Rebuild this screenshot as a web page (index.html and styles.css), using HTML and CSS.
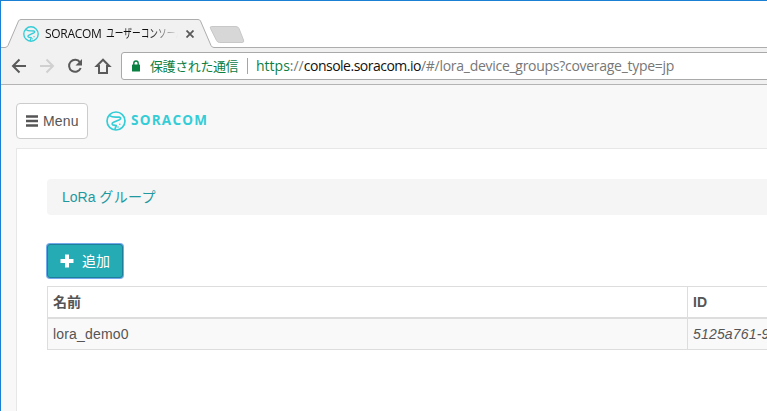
FILE: index.html
```
<!DOCTYPE html>
<html lang="ja">
<head>
<meta charset="utf-8">
<title>SORACOM ユーザーコンソール</title>
<link rel="stylesheet" href="styles.css">
</head>
<body>
<div class="window">
  <svg width="0" height="0" class="defs">
    <symbol id="mark" viewBox="0 0 20 20">
      <g fill="none" stroke="#34cdd7" stroke-width="1.7" stroke-linejoin="round" stroke-linecap="round">
        <circle cx="10" cy="10" r="9"/>
        <path d="M4 4.800C6.500 6.800 10 5.800 13.300 6.200C15.200 6.500 15 8 13.500 8.700L7.500 11.300C5.300 12.400 6 14 7.800 14.200L10.300 14.600L9 18"/>
      </g>
      <circle cx="13.800" cy="13.300" r=".8" fill="#34cdd7"/>
      <circle cx="12" cy="16" r=".8" fill="#34cdd7"/>
    </symbol>
  </svg>
  <header class="tabs">
    <svg class="tab-shape" width="766" height="47" viewBox="1 1 766 47">
      <path d="M0 47.500H5Q7 47.500 8 45.500L18.500 21Q19.200 19.500 21 19.500H198Q199.800 19.500 200.500 21L211 45.500Q212 47.500 214 47.500H768V50H0Z" fill="#f1f1f1" stroke="#adadad"/>
      <path d="M211.500 26.500H236Q238 26.500 239 28.500L243.500 40Q244.500 42.500 242 42.500H219.500Q217.500 42.500 216.500 40.500L210.500 28.500Q209.500 26.500 211.500 26.500Z" fill="#d7d7d7" stroke="#c8c8c8"/>
    </svg>
    <div class="tab">
      <svg class="favicon"><use href="#mark"/></svg>
      <span class="tab-title"><span class="tab-latin">SORACOM</span><span class="tab-kana">ユーザーコンソール</span></span>
      <svg class="close" width="8" height="8" viewBox="0 0 8 8"><path d="M.5.500L7.500 7.500M7.500.500L.5 7.500" stroke="#5a5a5a" stroke-width="1.8"/></svg>
    </div>
  </header>
  <nav class="toolbar">
    <svg class="nav-icons" width="120" height="36" viewBox="1 48 120 36" fill="none" stroke="#5a5a5a" stroke-width="2">
      <path d="M26 66H13.500M19.500 59.500L13 66L19.500 72.500"/>
      <path d="M40 66H52.500M46.500 59.500L53 66L46.500 72.500" stroke="#d0d0d0"/>
      <path d="M80 62.300A6 6 0 1 0 80.700 68"/>
      <path d="M82 59V65.500H75.500Z" fill="#5a5a5a" stroke="none"/>
      <path d="M103 59.700L96.700 66H99V73H107V66H109.300Z"/>
    </svg>
    <div class="address">
      <svg class="lock" width="8" height="12" viewBox="0 0 8 12"><path d="M1.800 5V3.200Q1.800 1 4 1Q6.200 1 6.200 3.200V5" fill="none" stroke="#0b8043" stroke-width="1.400"/><rect y="4.500" width="8" height="7" rx=".6" fill="#0b8043"/></svg>
      <span class="secure">保護された通信</span>
      <span class="url"><span class="scheme">https</span>://<span class="host">console.soracom.io</span><span class="path">/#/lora_device_groups?coverage_type=jp</span></span>
    </div>
  </nav>
  <div class="page">
    <div class="brandbar">
      <button class="menu"><svg width="12" height="12" viewBox="0 0 12 12"><path d="M0 1.500H12M0 6H12M0 10.500H12" stroke="#555" stroke-width="2.400"/></svg><span>Menu</span></button>
      <svg class="logo"><use href="#mark"/></svg>
      <span class="wordmark">SORACOM</span>
    </div>
    <main class="panel">
      <div class="crumb">LoRa <span class="crumb-kana">グループ</span></div>
      <button class="add"><svg width="14" height="14" viewBox="0 0 14 14"><path d="M7 .5V13.500M.5 7H13.500" stroke="#fff" stroke-width="4"/></svg><span>追加</span></button>
      <div class="table">
        <div class="cell head">名前</div><div class="cell head">ID</div>
        <div class="cell row">lora_demo0</div><div class="cell row id">5125a761-9</div>
      </div>
    </main>
  </div>
</div>
</body>
</html>
```
FILE: styles.css
```
* { box-sizing: border-box; }
body { margin: 0; overflow: hidden; }
.defs { position: absolute; }
.window {
  width: 767px; height: 411px; overflow: hidden;
  border: solid #1a80d3; border-width: 1px 0 0 1px;
  background: #fff; color: #555;
  font: 14px/20px "Liberation Sans", "Noto Sans CJK JP", sans-serif;
  white-space: nowrap;
}
svg { display: block; flex: none; }
.tabs { position: relative; height: 47px; padding: 19px 0 0 22px; }
.tab-shape { position: absolute; top: 0; left: 0; }
.tab { position: relative; display: flex; align-items: center; width: 173px; height: 27px; }
.favicon { width: 16px; height: 16px; }
.tab-title {
  display: flex; gap: 4px; width: 134px; margin-left: 6px; overflow: hidden;
  color: #111; font: 12px/20px "Open Sans", "Noto Sans CJK JP", sans-serif;
  -webkit-mask-image: linear-gradient(90deg, #000 105px, transparent 133px);
  mask-image: linear-gradient(90deg, #000 105px, transparent 133px);
}
.tab-latin { letter-spacing: -.3px; }
.tab-kana { transform: scaleX(.725); transform-origin: left; }
.close { margin-left: 7px; }
.toolbar { display: flex; height: 37px; background: #f1f1f1; border-bottom: 1px solid #b4b4b4; }
.address {
  display: flex; flex: none; align-items: center; width: 660px; height: 28px; margin-top: 4px; padding-left: 10px;
  border: 1px solid #a9a9a9; border-radius: 3px; background: #fff;
}
.secure {
  width: 98px; height: 16px; margin-left: 10px; border-right: 1px solid #a5a5a5;
  color: #0b8043; font: 13px/16px "Noto Sans CJK JP", sans-serif; letter-spacing: -.4px;
}
.url { margin-left: 8px; color: #777; font: 14px/20px "Open Sans", sans-serif; }
.scheme { color: #0b8043; }
.host { color: #111; letter-spacing: -.5px; }
.path { letter-spacing: -.28px; }
.page { height: 326px; padding-left: 15px; background: #f8f8f8; }
.brandbar { display: flex; align-items: center; height: 63px; padding-top: 8px; }
button { display: flex; align-items: center; font: inherit; }
.menu {
  width: 72px; height: 36px; padding: 0 0 0 9px; gap: 5px;
  border: 1px solid #ccc; border-radius: 4px; background: #fff; color: #555;
}
.menu span { letter-spacing: .2px; }
.logo { width: 20px; height: 20px; margin-left: 18px; }
.wordmark { margin-left: 5px; color: #34cdd7; font: 700 13.5px/18px "Open Sans", sans-serif; letter-spacing: 1.250px; margin-top: -2px; }
.panel { height: 263px; padding: 30px 0 0 30px; border: solid #e7e7e7; border-width: 1px 0 0 1px; background: #fff; }
.crumb { height: 36px; padding: 8px 15px; border-radius: 4px 0 0 4px; background: #f5f5f5; color: #1f989f; }
.crumb-kana { letter-spacing: .3px; }
.add {
  width: 76px; height: 34px; margin: 29px 0 8px; padding: 0 0 0 12px; gap: 8px;
  border: 1px solid #1f7f9b; border-radius: 3px; background: #24abb3; color: #fff;
  box-shadow: 0 0 0 1px #75a9ee;
}
.table { display: grid; grid-template-columns: 640px 120px; width: 761px; border: solid #ddd; border-width: 1px 0 0 1px; }
.cell { height: 31px; padding: 5px; border-right: 1px solid #ddd; border-bottom: 1px solid #ddd; }
.head { height: 32px; border-bottom-width: 2px; font-weight: 700; }
.row { background: #f9f9f9; letter-spacing: .18px; }
.id { font-style: italic; }
```
